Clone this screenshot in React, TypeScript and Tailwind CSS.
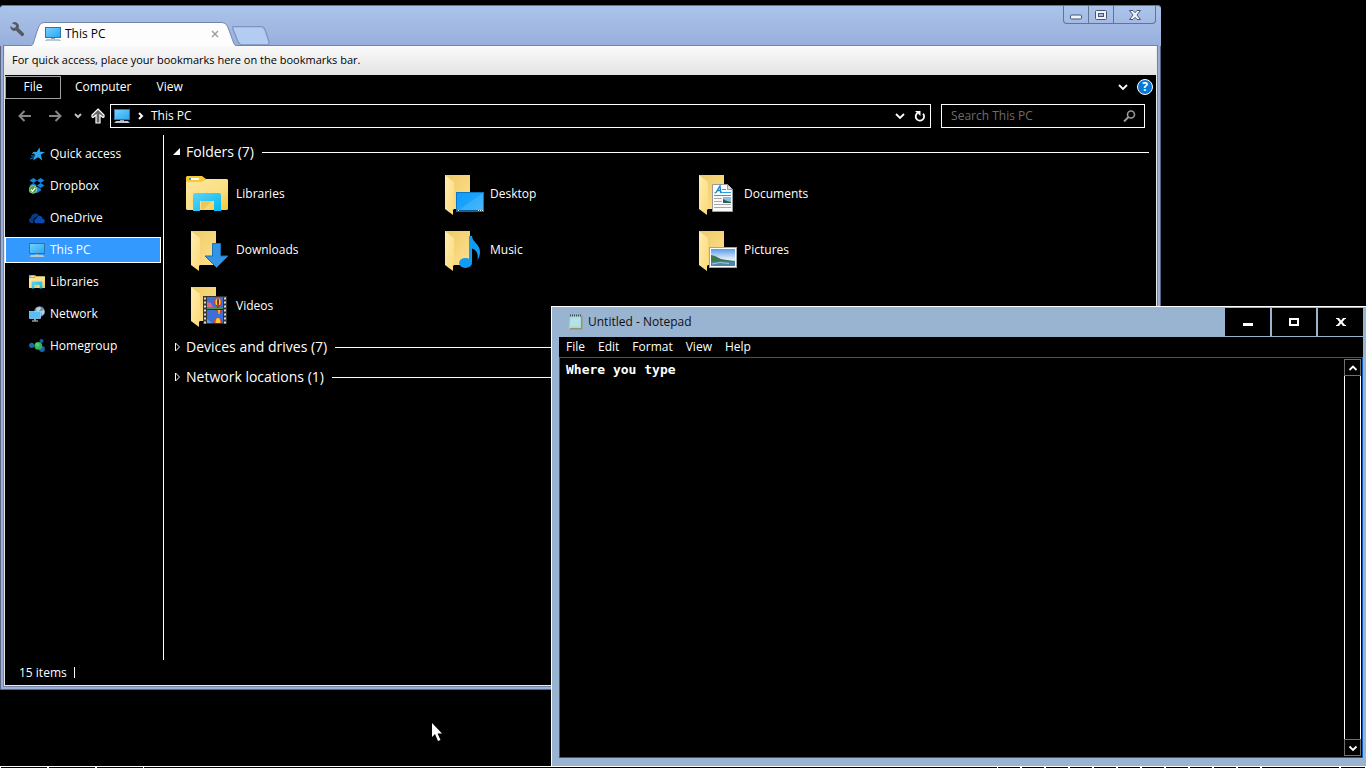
import type { ReactNode } from "react";

function MonitorIcon({ className = "w-4 h-4" }: { className?: string }) {
  return (
    <svg viewBox="0 0 16 16" className={className} aria-hidden="true">
      <defs>
        <linearGradient id="screen" x1="0" y1="0" x2="1" y2="1">
          <stop offset="0" stopColor="#7fd0fb" />
          <stop offset="0.5" stopColor="#4dbcf8" />
          <stop offset="1" stopColor="#2aa4f4" />
        </linearGradient>
      </defs>
      <rect x="0.5" y="1.5" width="15" height="10" fill="url(#screen)" stroke="#2b76a8" />
      <rect x="6" y="12" width="4" height="1" fill="#8fa3b3" />
      <path d="M2 13h12l2 2H0z" fill="#9fb4c4" />
      <path d="M2 14h12" stroke="#e8f0f5" strokeWidth="0.7" />
    </svg>
  );
}

function LibraryIcon({ className }: { className: string }) {
  return (
    <svg viewBox="0 0 42 36" className={className} aria-hidden="true">
      <defs>
        <linearGradient id="libBody" x1="0" y1="0" x2="1" y2="1">
          <stop offset="0" stopColor="#ffe69c" />
          <stop offset="0.6" stopColor="#fbdf84" />
          <stop offset="1" stopColor="#f2c634" />
        </linearGradient>
        <linearGradient id="libArch" x1="0" y1="0" x2="1" y2="1">
          <stop offset="0" stopColor="#5fd3f7" />
          <stop offset="1" stopColor="#00b9f2" />
        </linearGradient>
      </defs>
      <path d="M1 0h15l4 3-4 3H0V1z" fill="#fac832" />
      <path d="M0 6h15l5-3h21l1 1v29l-1 1H1l-1-1z" fill="url(#libBody)" />
      <rect x="3" y="2" width="10" height="2" fill="#fff" />
      <rect x="3" y="2" width="2" height="2" fill="#1aa7e8" />
      <path d="M15 24h12l-9 9h-3z" fill="#edc75b" />
      <path d="M7 35V19q0-2 2-2h24q2 0 2 2v16h-7V25H14v10z" fill="url(#libArch)" />
    </svg>
  );
}

function StarIcon() {
  return (
    <svg viewBox="0 0 16 16" className="w-4 h-4" aria-hidden="true">
      <path d="M10.500 1.500l.8 4.300 4.700.2-4.200 2.800 1.500 5.700-4.300-3.200-5 3.200 2-5.500L3.500 6l4.300-.2z" fill="#2ba5f0" />
      <path d="M3 7.500l3 .3M2 10h3.500M1 13l4-1.500" stroke="#1d7fc0" strokeWidth="1" />
    </svg>
  );
}

function DropboxIcon() {
  return (
    <svg viewBox="0 0 16 16" className="w-4 h-4" aria-hidden="true">
      <path d="M4.500 0L8 2.400 4.500 5 .5 2.500zM11.500 0l4 2.500-4 2.500L8 2.400zM.5 7.500l4-2.500L8 7.500 4.500 10zM11.500 5l4 2.500-4 2.500L8 7.500zM8 8.600l4 2.500v1.400L8 15l-4-2.500v-1.400z" fill="#1483e2" />
      <circle cx="4" cy="11.500" r="3.800" fill="#3fa535" stroke="#c4e6bd" strokeWidth="0.7" />
      <path d="M2 11.500l1.500 1.700 2.700-3.400" fill="none" stroke="#fff" strokeWidth="1.300" />
    </svg>
  );
}

function OneDriveIcon() {
  return (
    <svg viewBox="0 0 16 16" className="w-4 h-4" aria-hidden="true">
      <path d="M0 10.500C0 8.500 1.500 8 2 8c0-3 2-4.500 4.200-4.500 1.800 0 2.800.8 3.600 2L5 8.500C4 9.500 4 12 4.500 13H2.500C1 13 0 12 0 10.500z" fill="#083b86" />
      <path d="M5 11c0-1.600 1-2.500 2.200-2.600C7.500 6.500 9 5.500 10.500 5.500c2 0 3 1.500 3.200 3 1.400.2 2.300 1 2.300 2.400S15 13.500 13.600 13.500H7.400C6 13.500 5 12.500 5 11z" fill="#094ab2" stroke="#000" strokeWidth="0.5" />
    </svg>
  );
}

function NetworkIcon() {
  return (
    <svg viewBox="0 0 16 16" className="w-4 h-4" aria-hidden="true">
      <circle cx="10.500" cy="5.500" r="5.300" fill="#6c93ad" />
      <path d="M7 2.500q3-2.500 5-1l-1 2.500-3 2zM12 5l3-1q1 2 0 4l-2 1z" fill="#b9d2e1" />
      <rect x="0.5" y="5.500" width="11" height="7" fill="#55bdf7" stroke="#a5dcfb" strokeWidth="0.7" />
      <rect x="5" y="13" width="2" height="1.500" fill="#8fa3b3" />
      <rect x="3" y="14.500" width="6" height="1" fill="#d4e2ec" />
    </svg>
  );
}

function HomegroupIcon() {
  return (
    <svg viewBox="0 0 16 16" className="w-4 h-4" aria-hidden="true">
      <circle cx="2.700" cy="7.300" r="2.600" fill="#1668b8" />
      <circle cx="12.500" cy="3" r="2" fill="#135fa8" />
      <circle cx="13" cy="11" r="2.900" fill="#1766b6" />
      <circle cx="9.300" cy="7.800" r="3.900" fill="#33b35a" />
      <circle cx="8.500" cy="6.700" r="2" fill="#54cb76" />
    </svg>
  );
}

/* Folder seen from the side; the overlay drawn by children sits in front. */
function FolderIcon({ children }: { children: ReactNode }) {
  return (
    <svg viewBox="0 0 44 44" className="h-11 w-11" aria-hidden="true">
      <defs>
        <linearGradient id="folderBack" x1="0" y1="0" x2="1" y2="1">
          <stop offset="0" stopColor="#eecb6a" />
          <stop offset="1" stopColor="#ffe08a" />
        </linearGradient>
        <linearGradient id="folderFront" x1="0" y1="0" x2="1" y2="1">
          <stop offset="0" stopColor="#ffeeb5" />
          <stop offset="1" stopColor="#fbd976" />
        </linearGradient>
        <linearGradient id="deskBlue" x1="0" y1="0" x2="1" y2="1">
          <stop offset="0" stopColor="#0f9bf8" />
          <stop offset="0.5" stopColor="#1ca4fb" />
          <stop offset="0.51" stopColor="#36aefc" />
          <stop offset="1" stopColor="#4ab6fa" />
        </linearGradient>
        <linearGradient id="sky" x1="0" y1="0" x2="0" y2="1">
          <stop offset="0" stopColor="#5b9be8" />
          <stop offset="0.6" stopColor="#e1effb" />
        </linearGradient>
      </defs>
      <path d="M5 3h25v34H5z" fill="url(#folderBack)" />
      <path d="M5 3l9 7v27l-1 1v5l-8-6z" fill="url(#folderFront)" />
      {children}
    </svg>
  );
}

function Balloon({ x, y }: { x: number; y: number }) {
  return (
    <g>
      <ellipse cx={x} cy={y} rx="4" ry="3.800" fill="#d83a2a" />
      <ellipse cx={x} cy={y} rx="2.600" ry="3.800" fill="#f2cf2f" />
      <ellipse cx={x} cy={y} rx="1" ry="3.800" fill="#7a2440" />
      <path d={`M${x - 2} ${y + 3}h4l-1 3h-2z`} fill="#b03a20" />
    </g>
  );
}

const overlays: Record<string, ReactNode> = {
  Desktop: (
    <>
      <rect x="16.500" y="20.500" width="27" height="19" fill="url(#deskBlue)" stroke="#0878c4" />
      <rect x="17" y="38" width="26" height="1.500" fill="#075b96" />
      <path d="M18 38.500h1M38 38.500h1M40 38.500h1M42 38.500h1" stroke="#fff" />
    </>
  ),
  Documents: (
    <>
      <path d="M18.500 12.500h15l5 5v22h-20z" fill="#fafafa" stroke="#9a9a9a" />
      <path d="M33.500 12.500v5h5" fill="#ddd" stroke="#9a9a9a" />
      <path d="M20.500 21l1.500-.5L26 14l.8 6.500h1M23 18.500h4" fill="none" stroke="#1681c9" strokeWidth="1.300" />
      <path d="M28 17.500h4M28 20.500h9M20 23.500h17" stroke="#2a9de0" />
      <path d="M20 26.500h8M20 29.500h8M20 32.500h17M20 35.500h17" stroke="#a8a8a8" />
      <rect x="29" y="25" width="8" height="6" fill="#8fbde0" />
      <path d="M29 27l4 2 4 1v1h-8z" fill="#2c5d50" />
    </>
  ),
  Downloads: <path d="M26.500 15.500h8V28H42L30.500 39.500 19 28h7.500z" fill="#3594e6" stroke="#1672bd" />,
  Music: (
    <>
      <path d="M29 8h3c0 6 8 8 8 16 0 3-1 6-2.500 8 1-7-1.500-10-5.500-11.500V34h-3z" fill="#0f9cf5" />
      <ellipse cx="25.500" cy="35" rx="6.500" ry="5" fill="#0f9cf5" />
    </>
  ),
  Pictures: (
    <>
      <rect x="15.500" y="19.500" width="27" height="20" fill="#fff" stroke="#a4a4a4" />
      <rect x="17" y="21" width="24" height="17" fill="url(#sky)" />
      <path d="M17 27l4 1 6 3 6 1 8 1v1H17z" fill="#3c7950" />
      <path d="M17 33.500h24V38H17z" fill="#4c84ac" />
      <path d="M18 36l8-1.500 9 1" stroke="#a3c9df" fill="none" />
    </>
  ),
  Videos: (
    <>
      <rect x="17" y="12" width="24" height="28" fill="#333" />
      <rect x="21" y="13" width="16" height="26" fill="#3f6fd6" />
      <path d="M21 18l4 1 3 6h-7z" fill="#de668f" />
      <path d="M21 23h16v2H21z" fill="#4d9250" />
      <Balloon x={32} y={18} />
      <rect x="21" y="25" width="16" height="1" fill="#1c2b35" />
      <path d="M30 26h6l-2 4h-2z" fill="#d83a2a" />
      <path d="M32 26h2l-.5 4h-1z" fill="#f2cf2f" />
      <path d="M27.500 39a4.500 5 0 0 1 9 0z" fill="#d83a2a" />
      <path d="M29.500 39a2.500 5 0 0 1 5 0z" fill="#f2cf2f" />
      <path d="M21 35l5 4h-5z" fill="#5f9de0" />
      <path d="M19 13.500v26M39 13.500v26" stroke="#ddd" strokeWidth="2" strokeDasharray="2 2" />
    </>
  ),
};

const folders = ["Libraries", "Desktop", "Documents", "Downloads", "Music", "Pictures", "Videos"];

const places: { name: string; icon: ReactNode }[] = [
  { name: "Quick access", icon: <StarIcon /> },
  { name: "Dropbox", icon: <DropboxIcon /> },
  { name: "OneDrive", icon: <OneDriveIcon /> },
  { name: "This PC", icon: <MonitorIcon /> },
  { name: "Libraries", icon: <LibraryIcon className="h-4 w-4" /> },
  { name: "Network", icon: <NetworkIcon /> },
  { name: "Homegroup", icon: <HomegroupIcon /> },
];

function Chevron({ d }: { d: string }) {
  return (
    <svg viewBox="0 0 10 10" className="h-[10px] w-[10px]" aria-hidden="true">
      <path d={d} fill="none" stroke="currentColor" strokeWidth="1.800" />
    </svg>
  );
}
const down = "M1 3l4 4 4-4";

function GroupHeader({ label, open = false }: { label: string; open?: boolean }) {
  return (
    <div className="flex h-[30px] items-center gap-2">
      <button className="flex items-center gap-[5px] text-[14px]" aria-expanded={open}>
        <svg viewBox="0 0 8 10" className="h-[10px] w-2" aria-hidden="true">
          {open ? <path d="M7 1v7H0z" fill="#fff" /> : <path d="M2.500 1v8l4-4z" fill="none" stroke="#fff" />}
        </svg>
        {label}
      </button>
      <span className="h-px flex-1 bg-white" />
    </div>
  );
}

function BrowserTitle() {
  return (
    <div className="flex h-[41px] justify-between rounded-t border-t border-[#6d7486] bg-linear-to-b from-[#abc4ea] to-[#98afdc]">
      <div className="flex items-end">
        <button aria-label="Settings" className="mb-2 ml-[10px] h-4 w-4">
          <svg viewBox="0 0 16 16" aria-hidden="true">
            <path d="M2 1.500A4 4 0 0 1 8.500 6l5 5a1.700 1.700 0 0 1-2.600 2.600l-5-5A4 4 0 0 1 .5 4L3 6l2.500-.5L6 3z" fill="#555b66" />
          </svg>
        </button>
        <div className="relative ml-1 flex h-6 w-[208px] items-center pl-[15px] pr-[19px]">
          <svg viewBox="0 0 208 24" className="absolute inset-0 h-6 w-full" preserveAspectRatio="none" aria-hidden="true">
            <path d="M0 24C4 24 3 20 9 4Q10.500.5 14 .5H192q4 0 5.500 4C204 20 203 24 208 24" fill="#fdfdfd" stroke="#7383a8" />
          </svg>
          <div className="relative flex w-full items-center gap-1 text-black">
            <MonitorIcon />
            <span className="flex-1">This PC</span>
            <button aria-label="Close tab" className="text-[#a0a0a0]">
              <svg viewBox="0 0 8 8" className="h-2 w-2" aria-hidden="true">
                <path d="M1 1l6 6M7 1L1 7" stroke="currentColor" strokeWidth="1.500" />
              </svg>
            </button>
          </div>
        </div>
        <button aria-label="New tab" className="mb-1 h-4 w-8">
          <svg viewBox="0 0 32 16" className="-ml-2" aria-hidden="true">
            <path d="M3 .5h22q2 0 3 2.500l3 9q1 3-1.500 3H10q-2.500 0-3.500-2.500L2.500 3Q1.500.5 3 .5z" fill="#b3cdf2" stroke="#7f93bd" />
          </svg>
        </button>
      </div>
      <div className="mr-[5px] flex h-[18px] rounded-b border border-t-0 border-[#66738f] text-[#4b566e]">
        <button aria-label="Minimize" className="flex w-[25px] items-center justify-center border-r border-[#66738f]">
          <svg viewBox="0 0 12 6" className="mt-1 h-[6px] w-3" aria-hidden="true">
            <rect x="0.5" y="1" width="11" height="4" rx="1" fill="#eef3fb" stroke="currentColor" />
          </svg>
        </button>
        <button aria-label="Restore" className="flex w-[25px] items-center justify-center border-r border-[#66738f]">
          <svg viewBox="0 0 12 10" className="h-[10px] w-3" aria-hidden="true">
            <rect x="0.5" y="0.5" width="11" height="9" rx="1" fill="#eef3fb" stroke="currentColor" />
            <rect x="3.500" y="3.500" width="5" height="3" fill="#a7bfe6" stroke="currentColor" />
          </svg>
        </button>
        <button aria-label="Close" className="flex w-[41px] items-center justify-center">
          <svg viewBox="0 0 12 10" className="h-[10px] w-3" aria-hidden="true">
            <path d="M.5.5h3.500l2 2.200 2-2.200h3.500L8 5l3.500 4.500H8L6 7.300 4 9.500H.5L4 5z" fill="#eef3fb" stroke="currentColor" />
          </svg>
        </button>
      </div>
    </div>
  );
}

function Explorer() {
  return (
    <section aria-label="This PC" className="absolute left-0 top-[5px] bottom-[78px] flex w-[85%] flex-col rounded-t bg-[#98afdc]">
      <BrowserTitle />
      <div className="flex min-h-0 flex-1 border-x border-b border-[#5a6480] px-[3px] pb-[3px]">
        <div className="flex min-w-0 flex-1 flex-col border border-t-0 border-[#e8e8e8] bg-black outline outline-[#7383a8]">
          <p className="h-[29px] bg-linear-to-b from-[#fafafa] to-[#e4e4e4] pl-[7px] text-[11px] leading-[28px] text-black">
            For quick access, place your bookmarks here on the bookmarks bar.
          </p>
          <nav className="flex h-6 items-center pr-[3px]">
            <button className="h-[23px] w-14 border border-[#a0a0a0]">File</button>
            <button className="ml-[14px]">Computer</button>
            <button className="ml-[25px]">View</button>
            <button aria-label="Expand the ribbon" className="ml-auto">
              <Chevron d={down} />
            </button>
            <button aria-label="Help" className="ml-[9px] flex h-4 w-4 items-center justify-center rounded-full border border-white bg-[#0a78d6] font-bold">
              ?
            </button>
          </nav>
          <div className="flex h-9 items-center pl-[13px] pr-[11px] pb-[6px] pt-1">
            <button aria-label="Back" className="text-[#858585]">
              <svg viewBox="0 0 14 12" className="h-3 w-[14px]" aria-hidden="true">
                <path d="M13 6H2M6.500 1L1.500 6l5 5" fill="none" stroke="currentColor" strokeWidth="2" />
              </svg>
            </button>
            <button aria-label="Forward" className="ml-4 text-[#858585]">
              <svg viewBox="0 0 14 12" className="h-3 w-[14px]" aria-hidden="true">
                <path d="M1 6h11M7.500 1l5 5-5 5" fill="none" stroke="currentColor" strokeWidth="2" />
              </svg>
            </button>
            <button aria-label="Recent locations" className="ml-3 text-[#c0c0c0]">
              <svg viewBox="0 0 8 6" className="h-[6px] w-2" aria-hidden="true">
                <path d="M1 1l3 3 3-3" fill="none" stroke="currentColor" strokeWidth="2" />
              </svg>
            </button>
            <button aria-label="Up" className="ml-[9px]">
              <svg viewBox="0 0 14 16" className="h-4 w-[14px]" aria-hidden="true">
                <path d="M7 1l6 6v2l-1 .500-3-2.500v8H5V7L2 9.500 1 9V7z" fill="#666" stroke="#fff" strokeWidth="1.200" />
              </svg>
            </button>
            <div className="ml-[5px] flex h-6 flex-1 items-center border border-white pl-[3px] pr-1">
              <MonitorIcon />
              <svg viewBox="0 0 6 8" className="ml-2 h-2 w-[6px]" aria-hidden="true">
                <path d="M1 1l3 3-3 3" fill="none" stroke="#fff" strokeWidth="2" />
              </svg>
              <span className="ml-[7px] flex-1">This PC</span>
              <button aria-label="Previous locations">
                <Chevron d={down} />
              </button>
              <button aria-label="Refresh" className="ml-[9px]">
                <svg viewBox="0 0 12 12" className="h-3 w-3" aria-hidden="true">
                  <path d="M3.500 3A4.200 4.200 0 1 0 9 3.600" fill="none" stroke="#fff" strokeWidth="1.800" />
                  <path d="M1 1h5.500v5z" fill="#fff" />
                </svg>
              </button>
            </div>
            <label className="ml-[10px] flex h-6 w-[204px] items-center border border-white pl-[9px] pr-2">
              <input aria-label="Search" placeholder="Search This PC" className="min-w-0 flex-1 bg-transparent outline-none placeholder:text-[#6d6d6d]" />
              <svg viewBox="0 0 13 13" className="h-[13px] w-[13px]" aria-hidden="true">
                <circle cx="8" cy="4.500" r="3.500" fill="none" stroke="#999" strokeWidth="1.600" />
                <path d="M5.500 7L1 11.500" stroke="#999" strokeWidth="2" />
              </svg>
            </label>
          </div>
          <div className="flex min-h-0 flex-1">
            <aside className="flex w-[159px] flex-col gap-[6px] border-r border-white pt-[6px] pr-[2px]">
              {places.map((p) => (
                <button
                  key={p.name}
                  className={
                    p.name === "This PC"
                      ? "flex h-[26px] items-center gap-[5px] border border-white bg-[#3399ff] pl-[23px]"
                      : "flex h-[26px] items-center gap-[5px] border border-transparent pl-[23px]"
                  }
                >
                  {p.icon}
                  {p.name}
                </button>
              ))}
            </aside>
            <main className="min-w-0 flex-1 pl-[9px] pr-[7px] pt-[2px]">
              <GroupHeader label="Folders (7)" open />
              <div className="flex max-w-[779px] flex-wrap gap-y-2 pb-[2px] pl-[13px] pt-[3px]">
                {folders.map((name) => (
                  <button key={name} className="flex h-12 w-[254px] items-center gap-[6px] text-left">
                    <span className="flex h-11 w-11 items-center">
                      {name === "Libraries" ? <LibraryIcon className="h-9 w-[42px]" /> : <FolderIcon>{overlays[name]}</FolderIcon>}
                    </span>
                    {name}
                  </button>
                ))}
              </div>
              <GroupHeader label="Devices and drives (7)" />
              <GroupHeader label="Network locations (1)" />
            </main>
          </div>
          <footer className="flex h-[25px] items-center gap-[7px] pl-[14px]">
            15 items
            <span className="h-[11px] w-px bg-white" />
          </footer>
        </div>
      </div>
    </section>
  );
}

function Notepad() {
  return (
    <section aria-label="Notepad" className="absolute bottom-[2px] left-[551px] right-0 top-[306px] flex flex-col border-l border-t border-white bg-[#99b4d1] pb-2 pl-[7px] pr-[3px] pt-px">
      <header className="mb-px flex h-7 items-center">
        <svg viewBox="0 0 16 16" className="ml-[9px] h-4 w-4" aria-hidden="true">
          <path d="M2 2h12l1 13H1z" fill="#8fcbd3" />
          <path d="M13 2h1.500v13.500H2V14h11z" fill="#a08f6c" />
          <path d="M2 2h11v12H1z" fill="#a6dbe0" />
          <path d="M3 5h9M3 7h9M2.500 9H12M2.500 11H12" stroke="#cdeff0" strokeWidth="0.8" />
          <path d="M2 1.500h12" stroke="#3e4c50" strokeWidth="2" strokeDasharray="1 1" />
        </svg>
        <h1 className="ml-1 flex-1 text-[#101010]">Untitled - Notepad</h1>
        <div className="flex h-7 gap-[2px]">
          <button aria-label="Minimize" className="flex w-[45px] items-center justify-center bg-black">
            <span className="mt-1 h-[3px] w-[10px] bg-white" />
          </button>
          <button aria-label="Maximize" className="flex w-11 items-center justify-center bg-black">
            <span className="h-2 w-[10px] border-2 border-white" />
          </button>
          <button aria-label="Close" className="flex w-[45px] items-center justify-center bg-black">
            <svg viewBox="0 0 10 8" className="h-2 w-[10px]" aria-hidden="true">
              <path d="M0 0h3l2 2.500L7 0h3v1H9L6.500 4 9 7h1v1H7L5 5.500 3 8H0V7h1l2.500-3L1 1H0z" fill="#fff" />
            </svg>
          </button>
        </div>
      </header>
      <nav className="flex h-5 items-center gap-[13px] bg-black pl-[7px]">
        <button>File</button>
        <button>Edit</button>
        <button>Format</button>
        <button>View</button>
        <button>Help</button>
      </nav>
      <div className="flex min-h-0 flex-1 border border-[#0a5fc4] bg-black">
        <textarea
          aria-label="Text"
          spellCheck={false}
          defaultValue="Where you type"
          className="min-w-0 flex-1 resize-none bg-black px-[6px] py-1 font-['DejaVu_Sans_Mono','Liberation_Mono',monospace] text-[13px] leading-4 font-bold text-white outline-none"
        />
        <div className="my-px mr-px flex w-[17px] flex-col border-x border-white">
          <button aria-label="Scroll up" className="-mx-px flex h-[17px] items-center justify-center border border-[#707070]">
            <Chevron d="M1.500 7L5 3.500 8.500 7" />
          </button>
          <span className="flex-1" />
          <button aria-label="Scroll down" className="-mx-px flex h-[17px] items-center justify-center border border-[#707070]">
            <Chevron d="M1.500 3.500L5 7l3.500-3.500" />
          </button>
        </div>
      </div>
    </section>
  );
}

/* Top edge of the auto-hidden taskbar with its button separators. */
function Taskbar() {
  return (
    <footer className="absolute inset-x-0 bottom-0 flex h-[2px] justify-between border-t border-white">
      <div className="flex">
        {[0, 1, 2].map((i) => (
          <span key={i} className="w-12 border-x border-white" />
        ))}
      </div>
      <div className="flex">
        {[0, 1, 2, 3, 4, 5, 6, 7, 8, 9, 10].map((i) => (
          <span key={i} className="w-6 border-x border-white" />
        ))}
        <span className="w-[79px] border-x border-white" />
        <span className="w-[26px] border-x border-white" />
      </div>
    </footer>
  );
}

export default function App() {
  return (
    <div className="relative h-screen overflow-hidden bg-black font-['Open_Sans','Noto_Sans',sans-serif] text-[12px] leading-4 text-white">
      <Explorer />
      <Notepad />
      <Taskbar />
      <svg viewBox="0 0 12 20" className="absolute left-[431px] top-[722px] h-5 w-3" aria-hidden="true">
        <path d="M1 1v14l3-3 3 7 2.500-1-3-6.500H11z" fill="#fff" />
      </svg>
    </div>
  );
}
